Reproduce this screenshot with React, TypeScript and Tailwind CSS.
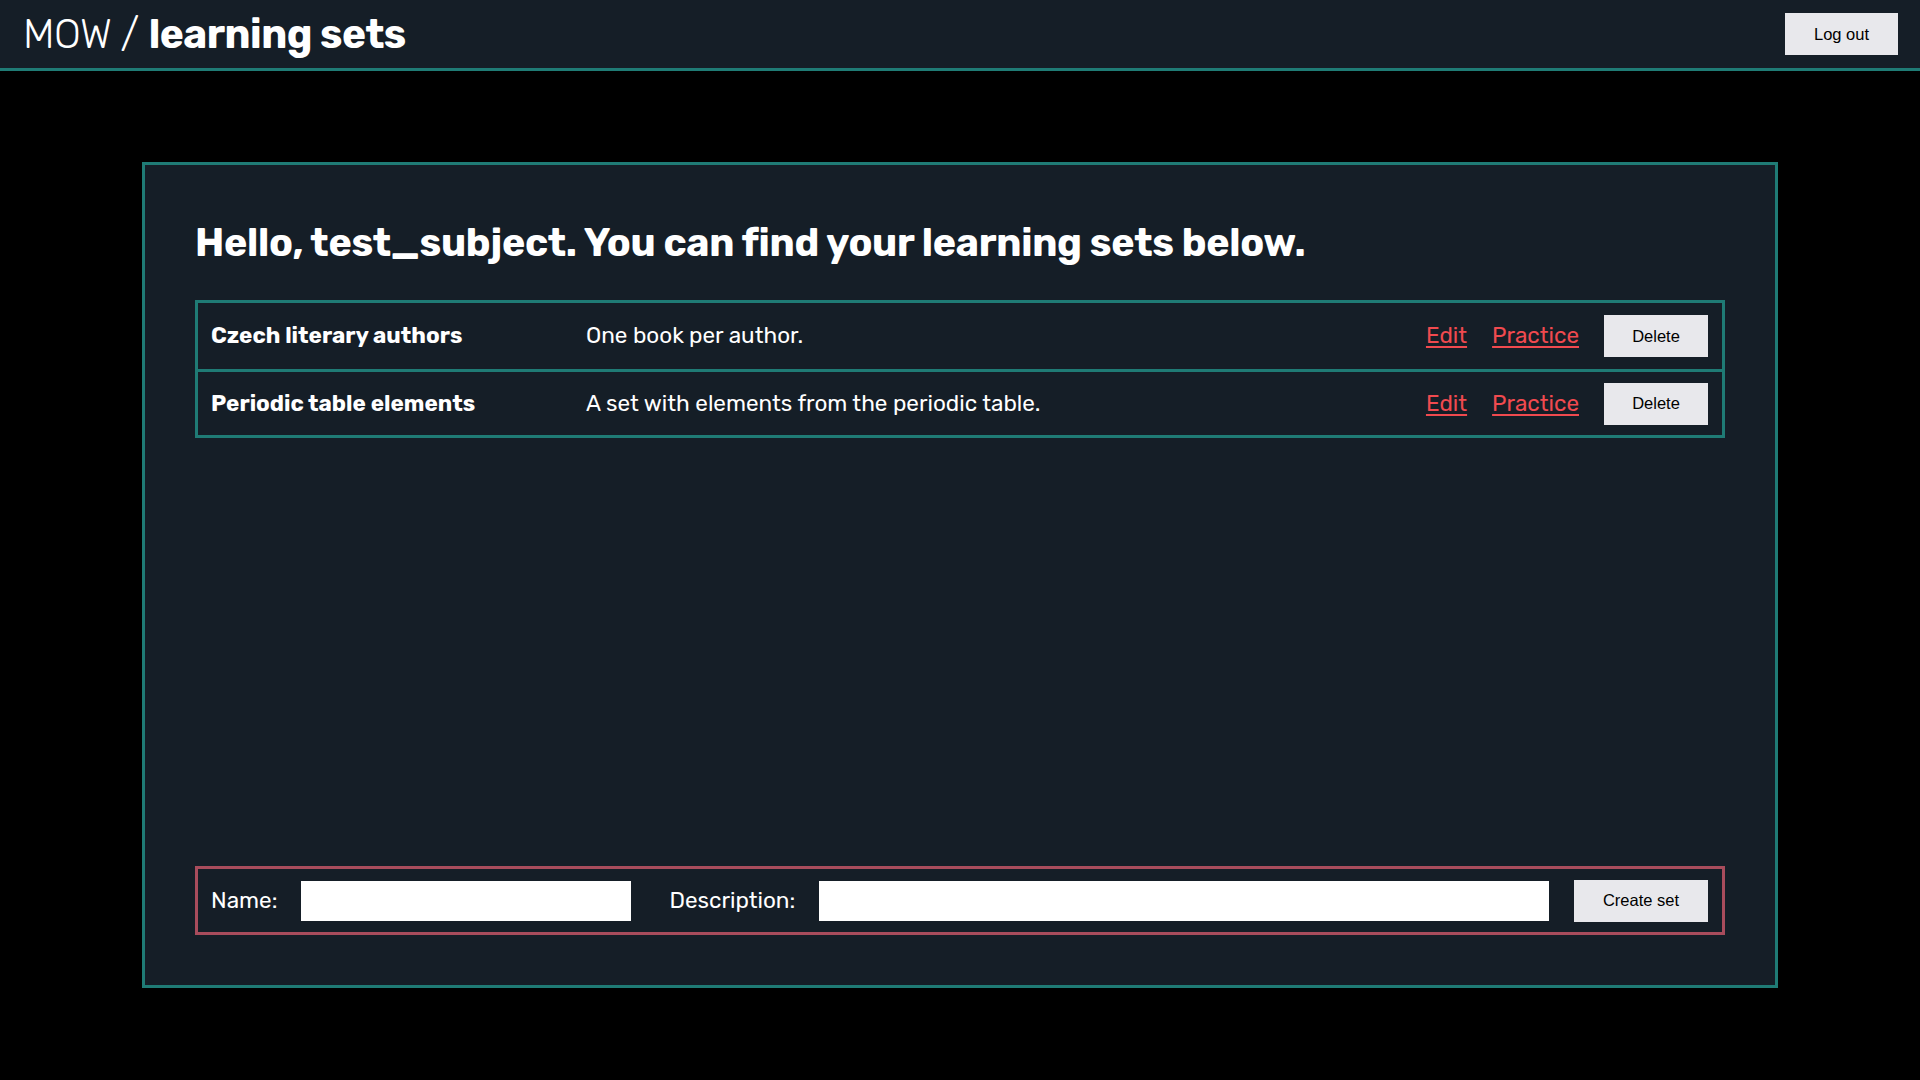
import React from "react";

const sets = [
  { name: "Czech literary authors", desc: "One book per author." },
  { name: "Periodic table elements", desc: "A set with elements from the periodic table." },
];

export default function App() {
  const body = { fontFamily: "Rubik, Inter, 'Noto Sans', sans-serif" };
  const btn = { fontFamily: "'Liberation Sans', Arial, sans-serif" };
  return (
    <div className="min-h-screen bg-black text-white" style={body}>
      <header className="flex h-[71px] items-center justify-between border-b-[3px] border-[#1f7b75] bg-[#151e27] pl-[23px] pr-[22px]">
        <h1 className="text-[40.5px] leading-none tracking-[-0.5px]">
          <span className="font-light">MOW / </span>
          <span className="font-bold">learning sets</span>
        </h1>
        <button className="h-[42px] w-[113px] bg-[#e8e8ec] text-[16.5px] text-black" style={btn}>
          Log out
        </button>
      </header>
      <main className="pt-[91px] px-[142px]">
        <div className="flex h-[826px] flex-col border-[3px] border-[#1f7b75] bg-[#151e27] px-[50px] pb-[50px] pt-[50px]">
          <h2 className="pt-[4px] text-[39.3px] font-bold leading-[48px] tracking-[-0.3px]">
            Hello, test_subject. You can find your learning sets below.
          </h2>
          <div className="mt-[33px] border-[3px] border-[#1f7b75]">
            {sets.map((s, i) => (
              <div
                key={s.name}
                className={`flex h-[66px] items-center pl-[13px] pr-[14px] ${i > 0 ? "border-t-[3px] border-[#1f7b75]" : ""}`}
              >
                <div className="w-[375px] text-[22.5px] font-bold">{s.name}</div>
                <div className="flex-1 text-[22.5px]">{s.desc}</div>
                <a href="#" className="mr-[25px] text-[22.5px] text-[#f04a4f] underline underline-offset-[3px]">Edit</a>
                <a href="#" className="mr-[25px] text-[22.5px] text-[#f04a4f] underline underline-offset-[3px]">Practice</a>
                <button className="h-[42px] w-[104px] bg-[#e8e8ec] text-[16.5px] text-black" style={btn}>
                  Delete
                </button>
              </div>
            ))}
          </div>
          <div className="flex-1" />
          <div className="flex h-[69px] items-center border-[3px] border-[#a84c5c] pl-[13px] pr-[14px]">
            <label className="text-[22.5px]">Name:</label>
            <input className="ml-[24px] h-[40px] w-[330px] bg-white" />
            <label className="ml-[38px] text-[22.5px]">Description:</label>
            <input className="ml-[24px] h-[40px] flex-1 bg-white" />
            <button className="ml-[25px] h-[42px] w-[134px] bg-[#e8e8ec] text-[16.5px] text-black" style={btn}>
              Create set
            </button>
          </div>
        </div>
      </main>
    </div>
  );
}
